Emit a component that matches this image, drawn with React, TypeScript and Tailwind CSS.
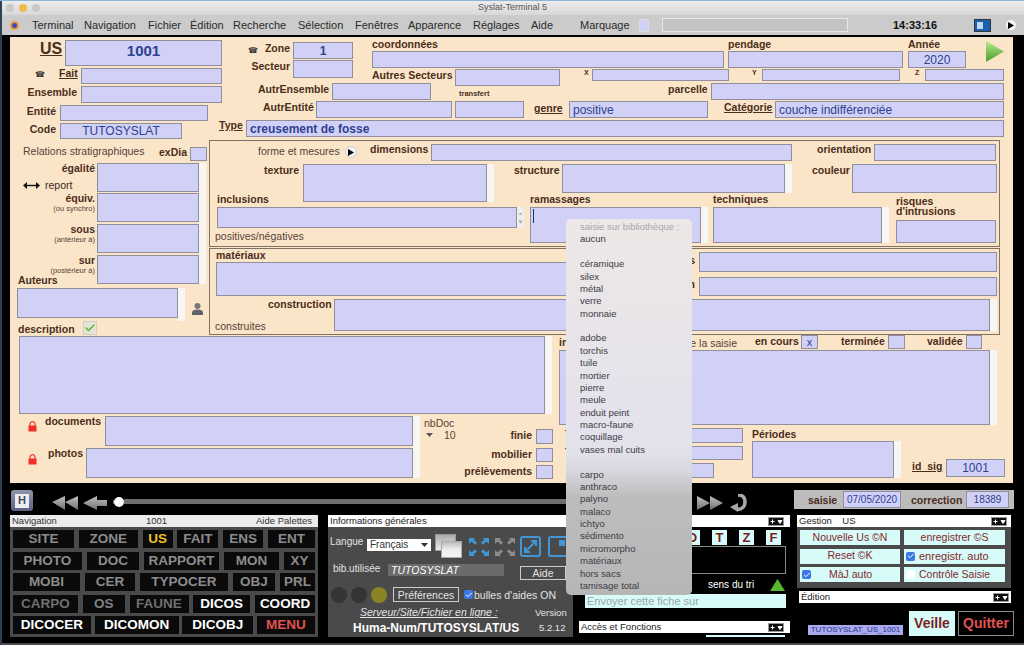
import type { ReactNode } from "react";
import { Check } from "lucide-react";
import { twMerge } from "tailwind-merge";

type Props = { className?: string; children?: ReactNode };

function Lab({ className = "", children }: Props) {
  return <div className={twMerge("shrink-0 whitespace-nowrap text-[10.5px] font-bold leading-3 text-[#4b2d1c]", className)}>{children}</div>;
}

function Txt({ className = "", children }: Props) {
  return <div className={twMerge("shrink-0 whitespace-nowrap text-[10.5px] leading-3 text-[#54433a]", className)}>{children}</div>;
}

function Field({ className = "", children, strip }: Props & { strip?: boolean }) {
  return (
    <div className="flex shrink-0 items-stretch">
      <div className={twMerge("box-border flex shrink-0 items-center overflow-hidden border border-[#918e9e] bg-[#d1d1f8] text-[#2c428f]", className)}>{children}</div>
      {strip && <div className="w-[7px] shrink-0 bg-[#f7f6f3]" />}
    </div>
  );
}

function Star({ className = "" }: Props) {
  return <div className={twMerge("shrink-0 text-[8px] leading-[9px] text-[#333]", className)}>☎</div>;
}

function PlayDot({ className = "" }: Props) {
  return (
    <div className={twMerge("flex h-3 w-3 shrink-0 items-center justify-center rounded-full border border-[#cfcfcf] bg-[#f4f4f4]", className)}>
      <svg width="6" height="7" viewBox="0 0 6 7"><path d="M0 0 6 3.5 0 7z" fill="#000" /></svg>
    </div>
  );
}

function LockIcon({ className = "" }: Props) {
  return (
    <svg className={twMerge("shrink-0", className)} width="9" height="11" viewBox="0 0 9 11">
      <path d="M2 5V3.2a2.5 2.5 0 0 1 5 0V5" fill="none" stroke="#f03a30" strokeWidth="1.2" />
      <rect x="0.5" y="4.5" width="8" height="6" fill="#f2302a" />
    </svg>
  );
}

function Toggle() {
  return (
    <svg className="shrink-0" width="16" height="9" viewBox="0 0 16 9">
      <rect x="0.5" y="0.5" width="15" height="8" fill="#111" stroke="#999" />
      <path d="M2.5 4.500h4M4.500 2.500v4M10 3.500h4L12 6.500z" stroke="#fff" fill="#fff" strokeWidth="1" />
    </svg>
  );
}

function Corners({ color, className = "" }: { color: string; className?: string }) {
  return (
    <svg className={twMerge("shrink-0", className)} width="20" height="18" viewBox="0 0 20 18" fill={color}>
      <path d="M0 0h6L4.600 1.600 8 4.600 6 6.800 2.600 3.600 0 6zM20 0h-6l1.400 1.600L12 4.600l2 2.200 3.400-3.200L20 6zM0 18h6l-1.400-1.600L8 13.400l-2-2.200-3.400 3.200L0 12zM20 18h-6l1.400-1.600-3.400-3 2-2.200 3.400 3.200L20 12z" />
    </svg>
  );
}

const navRows = [
  [
    { t: "SITE", w: "w-[61px]", c: "text-[#8d8d8d]" },
    { t: "ZONE", w: "w-[59px]", c: "text-[#8d8d8d]" },
    { t: "US", w: "w-[30px]", c: "text-[#f0c020]" },
    { t: "FAIT", w: "w-[41px]", c: "text-[#8d8d8d]" },
    { t: "ENS", w: "w-[40px]", c: "text-[#8d8d8d]" },
    { t: "ENT", w: "w-[47px]", c: "text-[#8d8d8d]" },
  ],
  [
    { t: "PHOTO", w: "w-[69px]", c: "text-[#8d8d8d]" },
    { t: "DOC", w: "w-[52px]", c: "text-[#8d8d8d]" },
    { t: "RAPPORT", w: "w-[75px]", c: "text-[#8d8d8d]" },
    { t: "MON", w: "w-[55px]", c: "text-[#8d8d8d]" },
    { t: "XY", w: "w-[31px]", c: "text-[#8d8d8d]" },
  ],
  [
    { t: "MOBI", w: "w-[67px]", c: "text-[#8d8d8d]" },
    { t: "CER", w: "w-[50px]", c: "text-[#8d8d8d]" },
    { t: "TYPOCER", w: "w-[88px]", c: "text-[#8d8d8d]" },
    { t: "OBJ", w: "w-[42px]", c: "text-[#8d8d8d]" },
    { t: "PRL", w: "w-[35px]", c: "text-[#8d8d8d]" },
  ],
  [
    { t: "CARPO", w: "w-[65px]", c: "text-[#6f6f6f]" },
    { t: "OS", w: "w-[42px]", c: "text-[#808080]" },
    { t: "FAUNE", w: "w-[59px]", c: "text-[#6f6f6f]" },
    { t: "DICOS", w: "w-[57px]", c: "text-white" },
    { t: "COORD", w: "w-[60px]", c: "text-white" },
  ],
  [
    { t: "DICOCER", w: "w-[78px]", c: "text-white" },
    { t: "DICOMON", w: "w-[84px]", c: "text-white" },
    { t: "DICOBJ", w: "w-[71px]", c: "text-white" },
    { t: "MENU", w: "w-[58px]", c: "text-[#e25252]" },
  ],
];

const menuItems = [
  "aucun", "", "céramique", "silex", "métal", "verre", "monnaie", "",
  "adobe", "torchis", "tuile", "mortier", "pierre", "meule", "enduit peint", "macro-faune", "coquillage", "vases mal cuits", "",
  "carpo", "anthraco", "palyno", "malaco", "ichtyo", "sédimento", "micromorpho", "matériaux", "hors sacs", "tamisage total",
];

const menuBar = ["Terminal", "Navigation", "Fichier", "Édition", "Recherche", "Sélection", "Fenêtres", "Apparence", "Réglages", "Aide"];
const menuGaps = ["w-[52px]", "w-[64px]", "w-[42px]", "w-[43px]", "w-[65px]", "w-[57px]", "w-[53px]", "w-[65px]", "w-[58px]", "w-[49px]"];

function TitleBars() {
  return (
    <>
      <div className="flex h-[14px] shrink-0 items-center bg-gradient-to-b from-[#ececec] to-[#d8d8d8]">
        <div className="ml-[4px] flex gap-[5px]">
          <div className="h-[8px] w-[8px] rounded-full bg-[#c9c9c9]" />
          <div className="h-[8px] w-[8px] rounded-full bg-[#f2b84a]" />
          <div className="h-[8px] w-[8px] rounded-full bg-[#c9c9c9]" />
        </div>
        <div className="flex-1 pr-[39px] text-center text-[9px] text-[#555]">Syslat-Terminal 5</div>
      </div>
      <div className="flex h-[20px] shrink-0 items-center bg-[#cbcbcb] text-[11px] text-[#2a2a2a]">
        <div className="ml-[8px] mr-[13px] h-[9px] w-[9px] shrink-0 rounded-full border-2 border-[#e99a3a] bg-[#3f49b8]" />
        {menuBar.map((m, i) => (
          <div key={m} className={`shrink-0 whitespace-nowrap ${menuGaps[i]}`}>{m}</div>
        ))}
        <div className="w-[59px] shrink-0">Marquage</div>
        <div className="h-[13px] w-[10px] shrink-0 border border-[#ddd] bg-[#d1d1f8]" />
        <div className="ml-[13px] h-[14px] w-[186px] shrink-0 border border-[#e6e6e6] bg-[#c4c4c4]" />
        <div className="ml-[45px] w-[45px] shrink-0 text-[11px] font-bold text-[#111]">14:33:16</div>
        <div className="ml-[36px] flex h-[13px] w-[17px] shrink-0 items-center border border-[#333] bg-[#1b5fb0] pl-[2px]">
          <div className="h-[7px] w-[6px] bg-[#bcd8f2]" />
        </div>
        <PlayDot className="ml-[14px]" />
      </div>
      <div className="h-px shrink-0 bg-black" />
    </>
  );
}

function TopForm() {
  return (
    <div className="flex h-[103px] shrink-0">
      <div className="w-[209px] shrink-0 pt-[3px]">
        <div className="flex h-[28px]">
          <Lab className="ml-[30px] mt-[1px] w-[21px] text-[16px] leading-[16px] underline">US</Lab>
          <Field className="ml-[4px] h-[26px] w-[157px] items-start justify-center text-[15px] font-bold leading-[19px]">1001</Field>
        </div>
        <div className="flex h-[18px]">
          <Star className="ml-[25px] mt-[2px] w-[9px]" />
          <Lab className="ml-[15px] mt-[-1px] w-[19px] underline">Fait</Lab>
          <Field className="ml-[3px] h-[16px] w-[141px]" />
        </div>
        <div className="flex h-[19px]">
          <Lab className="w-[67px] text-right">Ensemble</Lab>
          <Field className="ml-[4px] h-[17px] w-[141px]" />
        </div>
        <div className="flex h-[18px]">
          <Lab className="w-[46px] text-right">Entité</Lab>
          <Field className="ml-[4px] h-[16px] w-[148px]" />
        </div>
        <div className="flex h-[18px]">
          <Lab className="w-[46px] text-right">Code</Lab>
          <Field className="ml-[4px] h-[16px] w-[122px] justify-center text-[12px]">TUTOSYSLAT</Field>
        </div>
      </div>

      <div className="flex w-[794px] shrink-0 flex-col">
        <div className="flex h-[46px] shrink-0">
          <div className="ml-[29px] w-[105px] shrink-0 pt-[5px]">
            <div className="flex h-[18px]">
              <Star className="mt-[4px] w-[9px]" />
              <Lab className="w-[33px] text-right">Zone</Lab>
              <Field className="ml-[3px] h-[17px] w-[60px] justify-center text-[12px] font-bold">1</Field>
            </div>
            <div className="flex h-[18px]">
              <Lab className="w-[42px] text-right">Secteur</Lab>
              <Field className="ml-[3px] h-[18px] w-[60px]" />
            </div>
          </div>
          <div className="ml-[19px] w-[632px] shrink-0">
            <div className="flex h-[32px]">
              <div className="w-[352px] shrink-0">
                <Lab className="h-[14px] leading-[14px]">coordonnées</Lab>
                <Field className="h-[17px] w-[352px]" />
              </div>
              <div className="ml-[4px] w-[175px] shrink-0">
                <Lab className="h-[14px] leading-[14px]">pendage</Lab>
                <Field className="h-[17px] w-[175px]" />
              </div>
              <div className="ml-[5px] w-[58px] shrink-0">
                <Lab className="h-[14px] leading-[14px]">Année</Lab>
                <Field className="h-[17px] w-[58px] justify-center text-[12px]">2020</Field>
              </div>
              <svg className="ml-[20px] mt-[4px] shrink-0" width="18" height="21" viewBox="0 0 18 21">
                <defs>
                  <linearGradient id="go" x1="0" y1="0" x2="0" y2="1">
                    <stop offset="0" stopColor="#b6ea8a" />
                    <stop offset="1" stopColor="#4f9a2c" />
                  </linearGradient>
                </defs>
                <path d="M0 0 18 10.500 0 21z" fill="url(#go)" />
              </svg>
            </div>
            <div className="flex h-[14px] items-start">
              <Lab className="w-[79px]">Autres Secteurs</Lab>
              <Field className="ml-[4px] h-[17px] w-[105px]" />
              <Lab className="ml-[24px] w-[8px] text-[7px] leading-[8px]">X</Lab>
              <Field className="h-[12px] w-[137px]" />
              <Lab className="ml-[23px] w-[10px] text-[7px] leading-[8px]">Y</Lab>
              <Field className="h-[12px] w-[138px]" />
              <Lab className="ml-[15px] w-[10px] text-[7px] leading-[8px]">Z</Lab>
              <Field className="h-[12px] w-[79px]" />
            </div>
          </div>
        </div>

        <div className="flex h-[18px] shrink-0 items-start">
          <Lab className="ml-[39px] w-[70px] text-right">AutrEnsemble</Lab>
          <Field className="ml-[4px] h-[17px] w-[99px]" />
          <Lab className="ml-[28px] mt-[6px] w-[31px] text-[7.5px] leading-[9px]">transfert</Lab>
          <Lab className="ml-[178px] w-[39px] text-right">parcelle</Lab>
          <Field className="ml-[4px] h-[17px] w-[293px]" />
        </div>
        <div className="flex h-[19px] shrink-0 items-start">
          <Lab className="ml-[44px] w-[49px] text-right">AutrEntité</Lab>
          <Field className="ml-[4px] h-[17px] w-[136px]" />
          <Field className="ml-[3px] h-[17px] w-[69px]" />
          <Lab className="ml-[10px] mt-[1px] w-[27px] underline">genre</Lab>
          <Field className="ml-[8px] h-[17px] w-[139px] pl-[3px] text-[12px]">positive</Field>
          <Lab className="ml-[16px] w-[48px] underline">Catégorie</Lab>
          <Field className="ml-[3px] h-[17px] w-[229px] pl-[3px] text-[12px]">couche indifférenciée</Field>
        </div>
        <div className="flex h-[20px] shrink-0 items-start">
          <Lab className="mt-[-1px] w-[23px] underline">Type</Lab>
          <Field className="ml-[4px] h-[17px] w-[758px] pl-[3px] text-[12px] font-bold">creusement de fosse</Field>
        </div>
      </div>
    </div>
  );
}

function RelationRow({ label, sub, children, className = "" }: Props & { label: string; sub?: string }) {
  return (
    <div className={twMerge("flex h-[31px]", className)}>
      <div className="w-[85px] shrink-0 text-right">
        <Lab className="mt-[-1px]">{label}</Lab>
        {sub && <Txt className="text-[7.5px] leading-[10px]">{sub}</Txt>}
        {children}
      </div>
      <Field strip className="ml-[2px] h-[29px] w-[102px]" />
    </div>
  );
}

function MiddleForm() {
  return (
    <div className="flex h-[195px] shrink-0">
      <div className="w-[199px] shrink-0">
        <div className="mt-[7px] flex h-[16px]">
          <Txt className="ml-[13px] mt-[-2px] w-[136px]">Relations stratigraphiques</Txt>
          <Lab className="mt-[-1px] w-[27px]">exDia</Lab>
          <Field className="ml-[4px] h-[14px] w-[17px]" />
        </div>
        <RelationRow label="égalité" className="h-[30px]">
          <div className="mt-[5px] flex items-center">
            <svg className="ml-[13px] shrink-0" width="17" height="7" viewBox="0 0 17 7">
              <path d="M3 3.500h11" stroke="#111" strokeWidth="1.400" />
              <path d="M0 3.500 4 0v7zM17 3.500 13 0v7z" fill="#111" />
            </svg>
            <Txt className="ml-[5px] text-[#3a2a22]">report</Txt>
          </div>
        </RelationRow>
        <RelationRow label="équiv." sub="(ou synchro)" />
        <RelationRow label="sous" sub="(antérieur à)" />
        <RelationRow label="sur" sub="(postérieur à)" className="h-[29px]" />
        <Lab className="ml-[8px] mt-[-10px] h-[13px] leading-[13px]">Auteurs</Lab>
        <div className="mt-[1px] flex h-[33px]">
          <Field strip className="ml-[7px] h-[30px] w-[161px]" />
          <svg className="ml-[7px] mt-[15px] shrink-0" width="11" height="12" viewBox="0 0 11 12">
            <circle cx="5.500" cy="3" r="3" fill="#777" />
            <path d="M0 12V9.500C0 7.500 2.500 6.500 5.500 6.500S11 7.500 11 9.500V12z" fill="#5d6268" />
          </svg>
        </div>
        <div className="flex h-[15px]">
          <Lab className="ml-[8px] mt-[2px] w-[65px]">description</Lab>
          <div className="flex h-[14px] w-[14px] shrink-0 items-center justify-center border border-[#cfcfc4] bg-[#e4e4da]">
            <Check size={12} strokeWidth={3} className="text-[#63b02e]" />
          </div>
        </div>
      </div>

      <div className="flex w-[791px] shrink-0 flex-col gap-px">
        <div className="box-border h-[107px] shrink-0 border border-[#7d7264]">
          <div className="flex h-[23px]">
            <Txt className="ml-[48px] mt-[4px] w-[80px]">forme et mesures</Txt>
            <PlayDot className="ml-[7px] mt-[5px]" />
            <Lab className="ml-[13px] mt-[2px] w-[57px]">dimensions</Lab>
            <Field className="ml-[4px] mt-[3px] h-[17px] w-[361px]" />
            <Lab className="ml-[25px] mt-[2px] w-[53px]">orientation</Lab>
            <Field className="ml-[4px] mt-[3px] h-[17px] w-[122px]" />
          </div>
          <div className="flex h-[29px] items-start">
            <Lab className="ml-[54px] w-[35px]">texture</Lab>
            <Field strip className="ml-[4px] h-[38px] w-[184px]" />
            <Lab className="ml-[20px] w-[44px]">structure</Lab>
            <Field strip className="ml-[4px] h-[29px] w-[223px]" />
            <Lab className="ml-[20px] w-[37px]">couleur</Lab>
            <Field className="ml-[3px] h-[29px] w-[145px]" />
          </div>
          <div className="flex">
            <div className="ml-[7px] w-[307px] shrink-0">
              <Lab className="h-[14px] leading-[12px]">inclusions</Lab>
              <div className="flex">
                <Field className="h-[21px] w-[300px]" />
                <div className="flex h-[21px] w-[7px] shrink-0 flex-col items-center justify-center bg-[#eeeeee] text-[6px] leading-[6px] text-[#555]">
                  <span>^</span>
                  <span>v</span>
                </div>
              </div>
              <Txt className="ml-[-2px] mt-[2px]">positives/négatives</Txt>
            </div>
            <div className="ml-[6px] w-[178px] shrink-0">
              <Lab className="h-[14px] leading-[12px]">ramassages</Lab>
              <Field strip className="h-[36px] w-[171px] items-start pl-[2px] pt-[1px]">
                <div className="h-[14px] w-px bg-[#22306e]" />
              </Field>
            </div>
            <div className="ml-[5px] w-[176px] shrink-0">
              <Lab className="h-[14px] leading-[12px]">techniques</Lab>
              <Field strip className="h-[36px] w-[169px]" />
            </div>
            <div className="ml-[7px] w-[100px] shrink-0">
              <Lab className="mt-[3px] h-[24px] leading-[10px]">risques<br />d'intrusions</Lab>
              <Field className="h-[23px] w-[100px]" />
            </div>
          </div>
        </div>

        <div className="box-border h-[87px] shrink-0 border border-[#7d7264]">
          <div className="flex h-[50px]">
            <div className="ml-[6px] w-[430px] shrink-0">
              <Lab className="h-[13px]">matériaux</Lab>
              <Field className="h-[34px] w-[430px]" />
            </div>
            <div className="w-[351px] shrink-0">
              <div className="mt-[3px] flex">
                <Lab className="mt-[2px] w-[49px] text-right">matières</Lab>
                <Field className="ml-[4px] h-[20px] w-[298px]" />
              </div>
              <div className="mt-[5px] flex">
                <Lab className="mt-[1px] w-[49px] text-right">fonction</Lab>
                <Field className="ml-[4px] h-[19px] w-[298px]" />
              </div>
            </div>
          </div>
          <div className="flex items-start">
            <Txt className="ml-[5px] mt-[21px] w-[53px]">construites</Txt>
            <Lab className="mt-[-1px] w-[63px]">construction</Lab>
            <Field strip className="ml-[3px] h-[32px] w-[656px]" />
          </div>
        </div>
      </div>
    </div>
  );
}

function LowerForm() {
  return (
    <div className="flex h-[148px] shrink-0">
      <div className="w-[542px] shrink-0 pt-px">
        <Field strip className="ml-[9px] h-[78px] w-[526px]" />
        <div className="mt-[2px] flex">
          <div className="w-[410px] shrink-0">
            <div className="flex h-[32px]">
              <LockIcon className="ml-[18px] mt-[5px]" />
              <Lab className="ml-[8px] mt-[-1px] w-[55px]">documents</Lab>
              <Field strip className="ml-[5px] h-[30px] w-[308px]" />
            </div>
            <div className="flex h-[30px]">
              <LockIcon className="ml-[18px] mt-[6px]" />
              <Lab className="ml-[11px] mt-[-1px] w-[34px]">photos</Lab>
              <Field strip className="ml-[4px] h-[30px] w-[327px]" />
            </div>
          </div>
          <div className="ml-[4px] w-[40px] shrink-0">
            <Txt className="mt-[1px]">nbDoc</Txt>
            <div className="flex items-center">
              <svg className="ml-[2px] shrink-0" width="7" height="4" viewBox="0 0 7 4"><path d="M0 0h7L3.500 4z" fill="#555" /></svg>
              <Txt className="ml-[11px]">10</Txt>
            </div>
          </div>
          <div className="mt-[13px] w-[89px] shrink-0">
            <div className="flex h-[19px]">
              <Lab className="w-[68px] text-right">finie</Lab>
              <Field className="ml-[4px] h-[15px] w-[17px]" />
            </div>
            <div className="flex h-[17px]">
              <Lab className="w-[68px] text-right">mobilier</Lab>
              <Field className="ml-[4px] h-[14px] w-[17px]" />
            </div>
            <div className="flex h-[15px]">
              <Lab className="w-[68px] text-right">prélèvements</Lab>
              <Field className="ml-[4px] h-[14px] w-[17px]" />
            </div>
          </div>
        </div>
      </div>

      <div className="ml-[7px] w-[454px] shrink-0">
        <div className="flex h-[15px]">
          <div className="flex w-[178px] shrink-0 justify-between">
            <Lab className="mt-px">informations</Lab>
            <Txt className="mt-[2px]">de la saisie</Txt>
          </div>
          <Lab className="ml-[18px] w-[43px]">en cours</Lab>
          <Field className="ml-[3px] h-[14px] w-[17px] items-end justify-center text-[11px] leading-[12px]">x</Field>
          <Lab className="ml-[23px] w-[43px]">terminée</Lab>
          <Field className="ml-[4px] h-[14px] w-[17px]" />
          <Lab className="ml-[22px] w-[35px]">validée</Lab>
          <Field className="ml-[4px] h-[14px] w-[16px]" />
        </div>
        <Field strip className="h-[75px] w-[431px]" />
        <div className="mt-[3px] flex">
          <div className="w-[184px] shrink-0">
            <div className="flex h-[18px]">
              <Lab className="ml-[6px] w-[35px]">Tpq</Lab>
              <Field className="h-[15px] w-[143px]" />
            </div>
            <div className="flex h-[17px]">
              <Lab className="ml-[6px] w-[35px]">Taq</Lab>
              <Field className="h-[14px] w-[143px]" />
            </div>
            <div className="flex h-[15px]">
              <Field className="ml-[41px] h-[15px] w-[114px]" />
            </div>
          </div>
          <div className="ml-[9px] w-[149px] shrink-0">
            <Lab className="h-[13px]">Périodes</Lab>
            <Field strip className="h-[37px] w-[142px]" />
          </div>
          <div className="ml-[11px] mt-[31px] flex shrink-0 items-start">
            <Lab className="mt-px w-[30px] underline">id_sig</Lab>
            <Field className="ml-[4px] h-[18px] w-[59px] justify-center text-[12px]">1001</Field>
          </div>
        </div>
      </div>
    </div>
  );
}

function Transport() {
  return (
    <div className="flex h-[32px] shrink-0">
      <div className="ml-[9px] mt-[7px] flex h-[21px] w-[22px] shrink-0 items-center justify-center rounded-[3px] bg-gradient-to-b from-[#9095ad] to-[#5c6080]">
        <div className="flex h-[14px] w-[14px] items-center justify-center bg-[#eeeeee] text-[11px] font-bold leading-none text-[#444a66]">H</div>
      </div>
      <svg className="ml-[19px] mt-[13px] shrink-0" width="26" height="14" viewBox="0 0 26 14">
        <defs>
          <linearGradient id="steel" x1="0" y1="0" x2="0" y2="1">
            <stop offset="0" stopColor="#c0c0c0" />
            <stop offset="1" stopColor="#707070" />
          </linearGradient>
        </defs>
        <path d="M0 6 13 0v14zM13 6 26 0v14z" fill="url(#steel)" />
      </svg>
      <svg className="ml-[5px] mt-[13px] shrink-0" width="24" height="14" viewBox="0 0 24 14">
        <path d="M0 7 14 0v4h10v6H14v4z" fill="url(#steel)" />
      </svg>
      <div className="ml-[6px] flex w-[577px] shrink-0 items-center pt-[5px]">
        <div className="h-[4px] w-[1px] bg-[#777]" />
        <div className="h-[10px] w-[10px] shrink-0 rounded-full bg-white" />
        <div className="h-[5px] flex-1 bg-[#6e6e6e]" />
      </div>
      <svg className="ml-[7px] mt-[13px] shrink-0" width="26" height="14" viewBox="0 0 26 14">
        <path d="M13 7 0 0v14zM26 7 13 0v14z" fill="url(#steel)" />
      </svg>
      <svg className="ml-[7px] mt-[11px] shrink-0" width="17" height="18" viewBox="0 0 17 18">
        <path d="M8 1c5 0 7 3 7 7 0 5-4 8-8 7" fill="none" stroke="#a8a8a8" strokeWidth="3.500" />
        <path d="M0 13 8 9v9z" fill="#a8a8a8" />
      </svg>
      <div className="ml-[47px] mt-[7px] flex h-[19px] w-[220px] shrink-0 items-center bg-[#bcbcbc]">
        <Lab className="ml-[14px] w-[31px]">saisie</Lab>
        <Field className="ml-[4px] h-[17px] w-[58px] justify-center text-[10px]">07/05/2020</Field>
        <Lab className="ml-[10px] w-[50px]">correction</Lab>
        <Field className="ml-[5px] h-[17px] w-[43px] justify-center text-[10px]">18389</Field>
      </div>
    </div>
  );
}

function Header({ children, className = "" }: Props) {
  return (
    <div className={twMerge("flex h-[12px] shrink-0 items-center justify-between bg-white px-[2px] text-[9.5px] leading-none text-[#222]", className)}>
      {children}
    </div>
  );
}

function NavPanel() {
  return (
    <div className="flex h-full w-[308px] shrink-0 flex-col">
      <Header className="bg-[#ececec] pr-[6px] text-[#333]">
        <span>Navigation</span>
        <span>1001</span>
        <span>Aide Palettes</span>
      </Header>
      <div className="flex flex-1 flex-col gap-[3.5px] bg-[#4a4a4a] px-[3px] pt-[3px]">
        {navRows.map((row, i) => (
          <div key={i} className="flex h-[18px] justify-between">
            {row.map((b) => (
              <div key={b.t} className={`flex items-center justify-center bg-[#0a0a0a] text-[13.5px] font-bold leading-none ${b.w} ${b.c}`}>
                {b.t}
              </div>
            ))}
          </div>
        ))}
      </div>
    </div>
  );
}

function InfoPanel() {
  return (
    <div className="ml-[10px] flex h-full w-[245px] shrink-0 flex-col">
      <Header>Informations générales</Header>
      <div className="flex-1 bg-[#4a4a4a] text-[10px] leading-3 text-[#e4e4e4]">
        <div className="flex h-[35px] pt-[7px]">
          <div className="ml-[2px] mt-[2px] w-[37px] shrink-0">Langue</div>
          <div className="mt-[5px] flex h-[12px] w-[64px] shrink-0 items-center justify-between bg-white px-[3px] text-[#333]">
            Français
            <svg width="7" height="4" viewBox="0 0 7 4"><path d="M0 0h7L3.500 4z" fill="#333" /></svg>
          </div>
          <div className="ml-[4px] h-[24px] w-[27px] shrink-0">
            <div className="h-[17px] w-[21px] border border-[#999] bg-gradient-to-b from-[#aaaaaa] to-[#eeeeee]" />
            <div className="ml-[6px] mt-[-10px] h-[17px] w-[21px] border border-[#aaa] bg-gradient-to-b from-[#bbbbbb] via-[#eeeeee] to-[#f4f4f4]" />
          </div>
          <Corners color="#3f97d8" className="ml-[7px] mt-[4px]" />
          <Corners color="#8c8c8c" className="ml-[6px] mt-[4px]" />
          <div className="ml-[5px] mt-[2px] flex h-[21px] w-[21px] shrink-0 items-center justify-center rounded-[3px] border-2 border-[#3f97d8]">
            <svg width="13" height="13" viewBox="0 0 13 13" fill="none" stroke="#3f97d8" strokeWidth="2">
              <path d="M1 12 12 1M7 1h5v5M1 7v5h5" />
            </svg>
          </div>
          <div className="ml-[7px] mt-[2px] flex h-[21px] w-[21px] shrink-0 items-start justify-end rounded-[3px] border-2 border-[#3f97d8] p-[2px]">
            <div className="h-[6px] w-[6px] bg-[#3f97d8]" />
          </div>
        </div>
        <div className="mt-[2px] flex h-[21px]">
          <div className="ml-[5px] mt-[-1px] w-[55px] shrink-0">bib.utilisée</div>
          <div className="flex h-[12px] w-[116px] shrink-0 items-center bg-[#6b6b6b] pl-[3px] text-[10.5px] italic text-white">TUTOSYSLAT</div>
          <div className="ml-[16px] mt-[2px] flex h-[14px] w-[46px] shrink-0 items-center justify-center border border-[#ccc] text-[10.5px]">Aide</div>
        </div>
        <div className="flex h-[19px] items-center">
          <div className="ml-[3px] h-4 w-4 shrink-0 rounded-full bg-[#343434]" />
          <div className="ml-[4px] h-4 w-4 shrink-0 rounded-full bg-[#343434]" />
          <div className="ml-[4px] h-4 w-4 shrink-0 rounded-full bg-[#8a8424]" />
          <div className="ml-[6px] flex h-[15px] w-[66px] shrink-0 items-center justify-center border border-[#ccc] text-[10.5px]">Préférences</div>
          <div className="ml-[5px] flex h-[9px] w-[9px] shrink-0 items-center justify-center rounded-[2px] bg-[#3a78e6]">
            <Check size={8} strokeWidth={3} className="text-white" />
          </div>
          <div className="ml-[1px] whitespace-nowrap text-[10.5px]">bulles d'aides ON</div>
        </div>
        <div className="mt-[2px] flex h-[13px]">
          <div className="ml-[32px] w-[175px] shrink-0 whitespace-nowrap text-[10.5px] italic underline">Serveur/Site/Fichier en ligne :</div>
          <div className="mt-[1px] shrink-0 text-[9.5px]">Version</div>
        </div>
        <div className="mt-[3px] flex">
          <div className="ml-[25px] w-[186px] shrink-0 whitespace-nowrap text-[12px] font-bold text-white">Huma-Num/TUTOSYSLAT/US</div>
          <div className="shrink-0 text-[9.5px]">5.2.12</div>
        </div>
      </div>
    </div>
  );
}

function MiddlePanel() {
  return (
    <div className="ml-[6px] flex h-full w-[211px] shrink-0 flex-col">
      <Header className="justify-end pr-[6px]"><Toggle /></Header>
      <div className="ml-[106px] mt-[3px] flex h-[15px] gap-[12px]">
        {["D", "T", "Z", "F"].map((l) => (
          <div key={l} className="flex h-[15px] w-[15px] items-center justify-center bg-[#d6fbf9] text-[13px] font-bold leading-none text-[#7a1f1f]">{l}</div>
        ))}
      </div>
      <div className="ml-[6px] mt-[1px] h-[28px] w-[201px] shrink-0 border border-[#888]" />
      <div className="mt-[3px] flex h-[15px] items-center">
        <div className="ml-[129px] w-[62px] shrink-0 text-[10px] text-white">sens du tri</div>
        <svg width="15" height="12" viewBox="0 0 15 12"><path d="M7.500 0 15 12H0z" fill="#56b82c" /></svg>
      </div>
      <div className="ml-[6px] mt-[2px] flex h-[14px] w-[201px] shrink-0 items-center overflow-hidden bg-[#d6fbf9] pl-[2px] text-[11px] text-[#9aa8a8]">Envoyer cette fiche sur</div>
      <Header className="mt-[13px] pr-[6px]">
        <span>Accès et Fonctions</span>
        <Toggle />
      </Header>
      <div className="flex h-[6px] overflow-hidden">
        <div className="mt-[2px] w-[127px] shrink-0 text-[10px] text-[#999]">Bordereaux</div>
        <div className="mt-[2px] w-[79px] shrink-0 bg-[#d6fbf9] text-center text-[10px] text-[#7a1f1f]">mise en page</div>
      </div>
    </div>
  );
}

function GestionButton({ className = "", children }: Props) {
  return <div className={twMerge("flex items-center justify-center bg-[#d6fbf9] text-[10.5px] text-[#84282b]", className)}>{children}</div>;
}

function GestionPanel() {
  return (
    <div className="ml-[7px] flex h-full w-[217px] shrink-0 flex-col">
      <Header className="w-[214px] pr-[4px]">
        <span>Gestion&nbsp;&nbsp;&nbsp;&nbsp;US</span>
        <Toggle />
      </Header>
      <div className="grid h-[61px] w-[214px] shrink-0 grid-cols-[100px_101px] grid-rows-[15px_15px_15px] gap-x-[4px] gap-y-[3.5px] bg-[#4a4a4a] pl-[3px] pt-[3px]">
        <GestionButton>Nouvelle Us ©N</GestionButton>
        <GestionButton>enregistrer ©S</GestionButton>
        <GestionButton>Reset ©K</GestionButton>
        <GestionButton className="justify-start text-[11px]">
          <div className="ml-[2px] mr-[4px] flex h-[9px] w-[9px] items-center justify-center rounded-[2px] bg-[#3a78e6]">
            <Check size={8} strokeWidth={3} className="text-white" />
          </div>
          enregistr. auto
        </GestionButton>
        <GestionButton className="justify-start">
          <div className="ml-[2px] mr-[18px] flex h-[9px] w-[9px] items-center justify-center rounded-[2px] bg-[#3a78e6]">
            <Check size={8} strokeWidth={3} className="text-white" />
          </div>
          MàJ auto
        </GestionButton>
        <GestionButton className="justify-start">
          <div className="ml-[2px] mr-[4px] h-[9px] w-[9px] rounded-[2px] bg-white" />
          Contrôle Saisie
        </GestionButton>
      </div>
      <Header className="ml-[2px] mt-[3px] w-[212px] pr-[2px]">
        <span>Édition</span>
        <Toggle />
      </Header>
      <div className="mt-[8px] flex items-end">
        <div className="mb-px ml-[11px] flex h-[10px] w-[95px] shrink-0 items-center justify-center bg-[#a9a9ee] text-[8px] text-[#26358c]">TUTOSYSLAT_US_1001</div>
        <div className="ml-[6px] flex h-[25px] w-[46px] shrink-0 items-center justify-center bg-[#d6fbf9] text-[14px] font-bold text-[#7a1f1f]">Veille</div>
        <div className="ml-[3px] flex h-[25px] w-[56px] shrink-0 items-center justify-center border border-[#888] bg-black text-[14px] font-bold text-[#e25252]">Quitter</div>
      </div>
    </div>
  );
}

export default function App() {
  return (
    <div className="relative h-[645px] w-[1024px] overflow-hidden bg-[#2f3f55] [font-family:'Liberation_Sans',sans-serif]">
      <div className="h-px bg-[#8fb4da]" />
      <div className="ml-[2px] flex h-[644px] w-[1022px] flex-col">
        <TitleBars />
        <div className="flex flex-1 flex-col bg-black">
          <div className="ml-[8px] mt-px flex h-[446px] w-[1003px] shrink-0 flex-col bg-[#fbe5c8]">
            <TopForm />
            <MiddleForm />
            <LowerForm />
          </div>
          <Transport />
          <div className="ml-[8px] flex h-[122px] shrink-0">
            <NavPanel />
            <InfoPanel />
            <MiddlePanel />
            <GestionPanel />
          </div>
          <div className="mt-[6px] flex-1 bg-[#4a4a4a]" />
        </div>
      </div>

      <div className="absolute left-[566px] top-[219px] h-[376px] w-[126px] rounded-[5px] bg-[linear-gradient(180deg,#ede8e6_0%,#e7e4ea_35%,#e3e1ec_62%,#d8d7de_67%,#bdbdbd_74%,#b6b6b6_100%)] pl-[14px] pt-[2px] text-[9.5px] leading-[12.38px] text-[#3c3c44]">
        <div className="text-[#a9a6ac]">saisie sur bibliothèque :</div>
        {menuItems.map((m, i) => (
          <div key={i} className="h-[12.38px]">{m}</div>
        ))}
      </div>
    </div>
  );
}
